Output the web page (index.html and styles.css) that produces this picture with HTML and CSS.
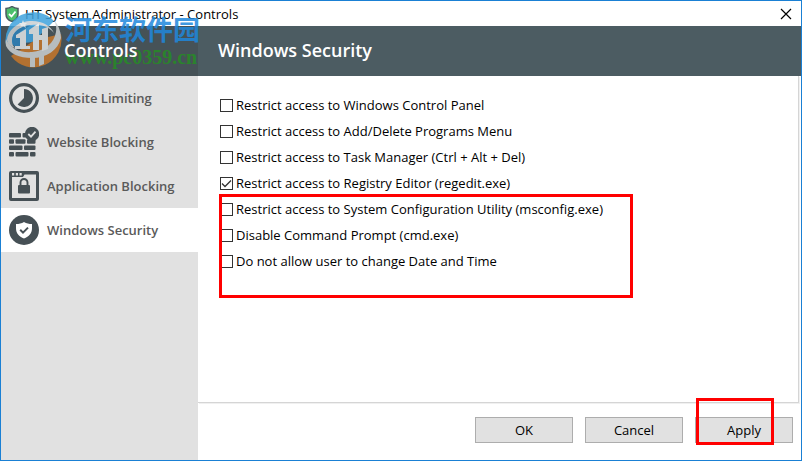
FILE: index.html
```html
<!DOCTYPE html>
<html lang="en">
<head>
  <meta charset="UTF-8">
  <meta name="viewport" content="width=device-width, initial-scale=1.0">
  <title>HT System Administrator - Controls</title>
  <link rel="stylesheet" href="styles.css">
</head>
<body>
  <div class="window">
    <div class="titlebar">
      <svg class="app-icon" width="14" height="16" viewBox="0 0 14 16">
        <path d="M7 0.5 C9 2 11 2.5 13 2.5 V8 C13 12 10 14.500 7 15.500 C4 14.500 1 12 1 8 V2.500 C3 2.500 5 2 7 0.500 Z" fill="#4cbf6b" stroke="#4a5a60" stroke-width="1.500"/>
        <path d="M4 8 L6.500 10.500 L10.500 5.500" fill="none" stroke="#fff" stroke-width="1.800"/>
      </svg>
      <span class="title">HT System Administrator - Controls</span>
      <button class="close" aria-label="Close">
        <svg width="12" height="12" viewBox="0 0 12 12"><path d="M1 1 L11 11 M11 1 L1 11" stroke="#000" stroke-width="1.200"/></svg>
      </button>
    </div>

    <header class="header">
      <div class="side-head"><h2 class="side-title">Controls</h2></div>
      <h1 class="page-title">Windows Security</h1>
    </header>

    <div class="main">
      <nav class="sidebar">
        <a class="item" href="#limiting">
          <svg width="30" height="30" viewBox="0 0 30 30">
            <circle cx="15" cy="15" r="13.400" fill="none" stroke="#465055" stroke-width="3.200"/>
            <path d="M15 6 A9 9 0 1 1 8.600 21.400 L15 15 Z" fill="#465055"/>
          </svg>
          <span>Website Limiting</span>
        </a>
        <a class="item" href="#blocking">
          <svg width="30" height="30" viewBox="0 0 30 30" fill="#465055">
            <rect x="0" y="6" width="12" height="4.500" rx="1"/>
            <rect x="13.500" y="6" width="6" height="4.500" rx="1"/>
            <rect x="0" y="12.200" width="5" height="4.500" rx="1"/>
            <rect x="6.500" y="12.200" width="10" height="4.500" rx="1"/>
            <rect x="18" y="12.200" width="8.500" height="4.500" rx="1"/>
            <rect x="0" y="18.600" width="13.500" height="4.500" rx="1"/>
            <rect x="15" y="18.600" width="11.500" height="4.500" rx="1"/>
            <rect x="0" y="25" width="5" height="4.500" rx="1"/>
            <rect x="6.500" y="25" width="13" height="4.500" rx="1"/>
            <rect x="21" y="25" width="5.500" height="4.500" rx="1"/>
            <circle cx="23" cy="7" r="7.200"/>
            <path d="M19.300 7 L22 9.600 L26.500 4.600" fill="none" stroke="#e1e1e1" stroke-width="1.800"/>
          </svg>
          <span>Website Blocking</span>
        </a>
        <a class="item" href="#application">
          <svg width="30" height="30" viewBox="0 0 30 30">
            <path d="M2 0 H28 Q30 0 30 2 V28 Q30 30 28 30 H2 Q0 30 0 28 V2 Q0 0 2 0 Z M3 6 V27 H27 V3.500 H15.500 L14 6 Z" fill="#465055" fill-rule="evenodd"/>
            <path d="M3 2 H5.200 V4.500 H3 Z M6.800 2 H9 V4.500 H6.800 Z M10.500 2 H12.700 V4.500 H10.500 Z" fill="#e1e1e1"/>
            <rect x="9" y="14" width="12" height="8.500" rx="1" fill="#465055"/>
            <path d="M11.500 14.500 V11.500 A3.500 3.500 0 0 1 18.500 11.500 V14.500" fill="none" stroke="#465055" stroke-width="1.900"/>
          </svg>
          <span>Application Blocking</span>
        </a>
        <a class="item active" href="#security" aria-current="page">
          <svg width="30" height="30" viewBox="0 0 30 30">
            <circle cx="15" cy="15" r="15" fill="#465055"/>
            <path d="M15 7 C17.500 8.500 20 9 23 9 V13 C23 18.500 20 21.500 15 23.500 C10 21.500 7 18.500 7 13 V9 C10 9 12.500 8.500 15 7 Z" fill="#fff"/>
            <path d="M11.200 14.800 L14 17.600 L19 12.600" fill="none" stroke="#465055" stroke-width="2"/>
          </svg>
          <span>Windows Security</span>
        </a>
      </nav>

      <div class="content">
        <form class="options">
          <label class="option"><input type="checkbox">Restrict access to Windows Control Panel</label>
          <label class="option"><input type="checkbox">Restrict access to Add/Delete Programs Menu</label>
          <label class="option"><input type="checkbox">Restrict access to Task Manager (Ctrl + Alt + Del)</label>
          <label class="option"><input type="checkbox" checked>Restrict access to Registry Editor (regedit.exe)</label>
          <div class="marked">
            <label class="option"><input type="checkbox">Restrict access to System Configuration Utility (msconfig.exe)</label>
            <label class="option"><input type="checkbox">Disable Command Prompt (cmd.exe)</label>
            <label class="option"><input type="checkbox">Do not allow user to change Date and Time</label>
            <div class="mark mark-options"></div>
          </div>
        </form>
        <div class="buttons">
          <button class="btn">OK</button>
          <button class="btn">Cancel</button>
          <div class="marked">
            <button class="btn">Apply</button>
            <div class="mark mark-apply"></div>
          </div>
        </div>
      </div>
    </div>

    <div class="watermark">
      <svg width="58" height="56" viewBox="0 0 58 56">
        <!-- globe: blue top, orange bottom -->
        <path d="M1 33 A28 28 0 0 1 49 9 L28 30 Z" fill="#3fa3de"/>
        <path d="M56 22 A28 28 0 0 1 6 44 L30 28 Z" fill="#c6772b"/>
        <!-- ring -->
        <path d="M49 8 A28 28 0 0 1 56 26 C53 38 42 46 27 46 C14 46 5 42 1 34 Q0 30 1 27 C5 36 15 41 27 40 C40 39 49 31 51 20 Q52 14 49 8 Z" fill="#cbd0d2"/>
        <path d="M2 28 C3 17 14 9 27 9 C38 9 46 14 49 21 C42 13 34 12 26 13 C15 14 7 20 7 29 Q7 33 10 36 Q3 34 2 28 Z" fill="#cbd0d2"/>
        <path d="M7 29 C7 20 15 14 26 13 L15 20 V37 Q7 35 7 29 Z" fill="#2b82bb"/>
        <!-- towers -->
        <path d="M11 23 L21 17 V34 H25 V37 H10 V34 H15 V26 H11 Z" fill="#e3e7e8"/>
        <path d="M24 18 L34 11 V38 H28 V22 H24 Z" fill="#e3e7e8"/>
        <path d="M34 23 H37 V17 L43 15 V37 L37 39 V28 H34 Z" fill="#e3e7e8"/>
        <path d="M25 45 H30 V55 H25 Z M34 45 L39 43 V52 L34 54 Z" fill="#cbd0d2"/>
        <path d="M18 8 L19 11 L22 11 L20 13 L21 16 L18 14 L15 16 L16 13 L14 11 L17 11 Z" fill="#e3e7e8"/>
      </svg>
      <div class="wm-text">
        <span class="wm-name" lang="zh">河东软件园</span>
        <span class="wm-url">www.pc0359.cn</span>
      </div>
    </div>
  </div>
</body>
</html>
```
FILE: styles.css
```css
* {
  box-sizing: border-box;
}
body {
  margin: 0;
  font-family: "Open Sans", "Noto Sans", sans-serif;
  font-size: 13px;
  line-height: 18px;
  color: #000;
}
.window {
  position: relative;
  display: flex;
  flex-direction: column;
  min-height: 100vh;
  border: 1px solid #1a80d4;
  background: #fff;
}
.titlebar {
  display: flex;
  align-items: center;
  height: 25px;
  padding: 0 9px 0 4px;
}
.title {
  flex: 1;
  margin-left: 6px;
}
.close {
  display: flex;
  padding: 0;
  border: none;
  background: none;
}
.header {
  display: flex;
  align-items: center;
  height: 50px;
  background: #4c5c62;
  color: #fff;
}
.side-title,
.page-title {
  margin: 0;
  font-size: 18px;
  font-weight: 600;
  line-height: 22px;
}
.side-head {
  display: flex;
  align-items: center;
  width: 197px;
  height: 100%;
  padding: 0 0 2px 63px;
  background: #465257;
}
.side-title {
  position: relative;
  z-index: 2;
}
.page-title {
  padding: 0 0 2px 20px;
}
.main {
  display: flex;
  flex: 1;
}
.sidebar {
  width: 197px;
  background: #e1e1e1;
}
.item {
  display: flex;
  align-items: center;
  gap: 8px;
  height: 44px;
  padding-left: 8px;
  color: #5a5a5a;
  font-weight: 600;
  text-decoration: none;
}
.item.active {
  background: #fff;
}
.content {
  display: flex;
  flex: 1;
  flex-direction: column;
}
.options {
  flex: 1;
  margin-right: 2px;
  padding: 16px 0 0 22px;
  border-right: 1px solid #d5d5d5;
  border-bottom: 1px solid #d5d5d5;
  box-shadow: 1px 1px 0 #f0f0f0;
}
.option {
  display: flex;
  align-items: center;
  gap: 3px;
  height: 26px;
}
.option input {
  appearance: none;
  width: 13px;
  height: 13px;
  margin: 0;
  border: 1px solid #333;
  background: #fff;
}
.option input:checked {
  background: url("data:image/svg+xml,%3Csvg xmlns='http://www.w3.org/2000/svg' viewBox='0 0 11 11'%3E%3Cpath d='M1 5.500 L4 8.500 L10 2.500' fill='none' stroke='%23333' stroke-width='1.300'/%3E%3C/svg%3E");
}
.marked {
  position: relative;
}
.mark {
  position: absolute;
  border: 3px solid #f00;
  pointer-events: none;
}
.mark-options {
  top: -2px;
  left: -1px;
  width: 414px;
  height: 104px;
}
.buttons {
  display: flex;
  justify-content: flex-end;
  gap: 12px;
  padding: 14px 8px 17px 0;
}
.btn {
  display: block;
  width: 98px;
  height: 26px;
  padding: 0;
  border: 1px solid #adadad;
  background: #e1e1e1;
  color: #000;
  font-family: inherit;
  font-size: 13px;
}
.mark-apply {
  top: -19px;
  left: 1px;
  width: 78px;
  height: 47px;
}
.watermark {
  position: absolute;
  top: 11px;
  left: 4px;
  z-index: 1;
  display: flex;
  opacity: 0.85;
  pointer-events: none;
}
.wm-text {
  display: flex;
  flex-direction: column;
  padding-left: 2px;
}
.wm-name {
  color: #2088dc;
  font-family: "Noto Sans CJK SC", sans-serif;
  font-size: 27px;
  font-weight: 700;
  line-height: 34px;
}
.wm-url {
  color: #268c26;
  font-family: "Liberation Serif", serif;
  font-size: 20px;
  font-weight: 700;
  line-height: 22px;
}
```
